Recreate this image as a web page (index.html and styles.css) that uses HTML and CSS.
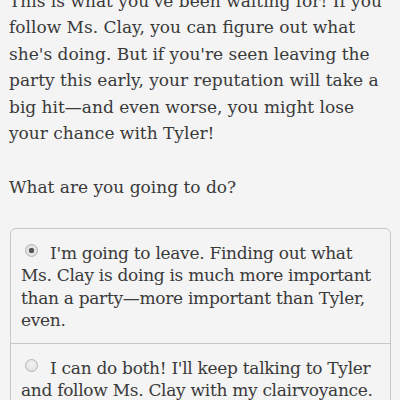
FILE: index.html
```html
<!DOCTYPE html>
<html>
<head>
<meta charset="utf-8">
<title>Choose your path</title>
<link rel="stylesheet" href="styles.css">
</head>
<body>
  <div id="story">
    <p class="passage">This is what you've been waiting for! If you follow Ms. Clay, you can figure out what she's doing. But if you're seen leaving the party this early, your reputation will take a big hit&mdash;and even worse, you might lose your chance with Tyler!</p>
    <p class="passage question">What are you going to do?</p>
  </div>
  <form id="choices" action="#" method="get">
    <label class="choice"><input type="radio" name="choice" value="leave" checked> I'm going to leave. Finding out what Ms. Clay is doing is much more important than a party&mdash;more important than Tyler, even.</label>
    <label class="choice"><input type="radio" name="choice" value="both"> I can do both! I'll keep talking to Tyler and follow Ms. Clay with my clairvoyance.</label>
  </form>
</body>
</html>
```

FILE: styles.css
```css
html
{
background: #f4f4f4;
}

body
{
margin: 0;
padding: 0 9px;
font-family: "DejaVu Serif", "Noto Serif", serif;
font-size: 17px;
color: #3a3a3a;
overflow: hidden;
}

#story
{
margin-top: -12.5px;
}

.passage
{
margin: 0 0 26.6px 0;
line-height: 26.6px;
}

.question
{
margin-bottom: 0;
}

#choices
{
margin: 27.7px 0 0 1px;
border: 1px solid #c8c8c8;
border-radius: 6px;
}

.choice
{
display: block;
padding: 13px 5px 12px 10px;
line-height: 22.3px;
letter-spacing: -0.3px;
border-top: 1px solid #c8c8c8;
}

.choice:first-child
{
border-top: none;
}

.choice input
{
-webkit-appearance: none;
appearance: none;
display: inline-block;
width: 13px;
height: 13px;
margin: 0 7px 0 4px;
border: 1px solid #b4b4b4;
border-radius: 50%;
background: radial-gradient(circle at 50% 40%, #f4f4f4, #dcdcdc);
vertical-align: 2px;
box-sizing: border-box;
}

.choice input:checked
{
background: radial-gradient(circle, #555 0, #555 2.5px, #e6e6e6 3px, #d8d8d8);
}
```
